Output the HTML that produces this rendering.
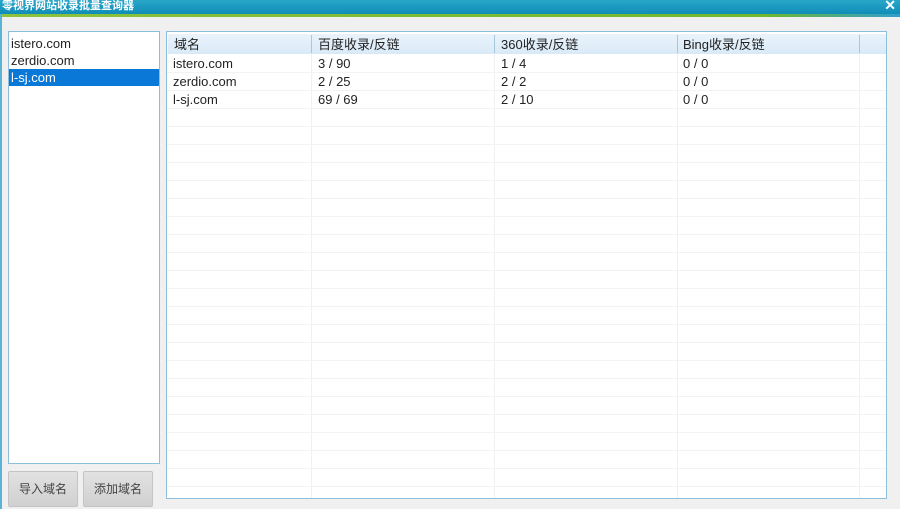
<!DOCTYPE html>
<html><head><meta charset="utf-8"><style>
*{margin:0;padding:0;box-sizing:border-box}
body{width:900px;height:509px;background:#f0f0f0;position:relative;overflow:hidden;font-family:"Liberation Sans","Noto Sans CJK SC",sans-serif;font-size:13px;color:#222}
.title{position:absolute;left:0;top:0;width:900px;height:14px;background:linear-gradient(#2aa6c9,#0f8db8);color:#fff;font-size:11px;font-weight:bold;line-height:13px;padding-left:2px}
.gl{position:absolute;left:0;top:14px;width:900px;height:3px;background:linear-gradient(90deg,#8cc23c,#6fb82c 85%,#2f9ed0)}
.x{position:absolute;right:4px;top:-1px;color:#fff;font-size:14px;font-weight:bold}
.lb{position:absolute;left:0;top:14px;width:2px;height:495px;background:#5bb4d6}
.list{position:absolute;left:8px;top:31px;width:152px;height:433px;background:#fff;border:1px solid #8dbfdc;padding-top:3px}
.list div{height:17px;line-height:17px;padding-left:2px;font-size:13px}
.sel{background:#0a78d7;color:#fff}
.btn{position:absolute;top:471px;width:70px;height:36px;background:linear-gradient(#e2e2e2,#d0d0d0);border:1px solid #c4c4c4;border-radius:2px;text-align:center;line-height:34px;font-size:12px;color:#444}
.panel{position:absolute;left:166px;top:31px;width:721px;height:468px;background:#fff;border:1px solid #8dbfdc;overflow:hidden}
.hdr{position:absolute;left:1px;top:2px;width:718px;height:20px;background:linear-gradient(#eaf3fb,#d9eaf7)}
.r{position:absolute;left:0;width:720px;height:18px;border-bottom:1px solid #f3f3f3}
.c{position:absolute;top:0;line-height:18px}
.v{position:absolute;top:2px;bottom:0;width:1px;background:#f0f0f0}
.hv{position:absolute;top:3px;height:18px;width:1px;background:#a9c6dd}
</style></head><body>
<div class="title">零视界网站收录批量查询器<span class="x">✕</span></div>
<div class="gl"></div>
<div class="lb"></div>
<div class="list"><div>istero.com</div><div>zerdio.com</div><div class="sel">l-sj.com</div></div>
<div class="btn" style="left:8px">导入域名</div>
<div class="btn" style="left:83px">添加域名</div>
<div class="panel">
<div class="v" style="left:144px"></div><div class="v" style="left:327px"></div><div class="v" style="left:510px"></div><div class="v" style="left:692px"></div>
<div class="hdr"></div>
<div class="hv" style="left:144px"></div><div class="hv" style="left:327px"></div><div class="hv" style="left:510px"></div><div class="hv" style="left:692px"></div>
<div class="c" style="left:7px;top:3px;line-height:20px">域名</div>
<div class="c" style="left:151px;top:3px;line-height:20px">百度收录/反链</div>
<div class="c" style="left:334px;top:3px;line-height:20px">360收录/反链</div>
<div class="c" style="left:516px;top:3px;line-height:20px">Bing收录/反链</div>
<div class="r" style="top:23px"><span class="c" style="left:6px">istero.com</span><span class="c" style="left:151px">3 / 90</span><span class="c" style="left:334px">1 / 4</span><span class="c" style="left:516px">0 / 0</span></div>
<div class="r" style="top:41px"><span class="c" style="left:6px">zerdio.com</span><span class="c" style="left:151px">2 / 25</span><span class="c" style="left:334px">2 / 2</span><span class="c" style="left:516px">0 / 0</span></div>
<div class="r" style="top:59px"><span class="c" style="left:6px">l-sj.com</span><span class="c" style="left:151px">69 / 69</span><span class="c" style="left:334px">2 / 10</span><span class="c" style="left:516px">0 / 0</span></div>
<div class="r" style="top:77px"></div><div class="r" style="top:95px"></div><div class="r" style="top:113px"></div><div class="r" style="top:131px"></div><div class="r" style="top:149px"></div><div class="r" style="top:167px"></div><div class="r" style="top:185px"></div><div class="r" style="top:203px"></div><div class="r" style="top:221px"></div><div class="r" style="top:239px"></div><div class="r" style="top:257px"></div><div class="r" style="top:275px"></div><div class="r" style="top:293px"></div><div class="r" style="top:311px"></div><div class="r" style="top:329px"></div><div class="r" style="top:347px"></div><div class="r" style="top:365px"></div><div class="r" style="top:383px"></div><div class="r" style="top:401px"></div><div class="r" style="top:419px"></div><div class="r" style="top:437px"></div>
</div>
</body></html>
